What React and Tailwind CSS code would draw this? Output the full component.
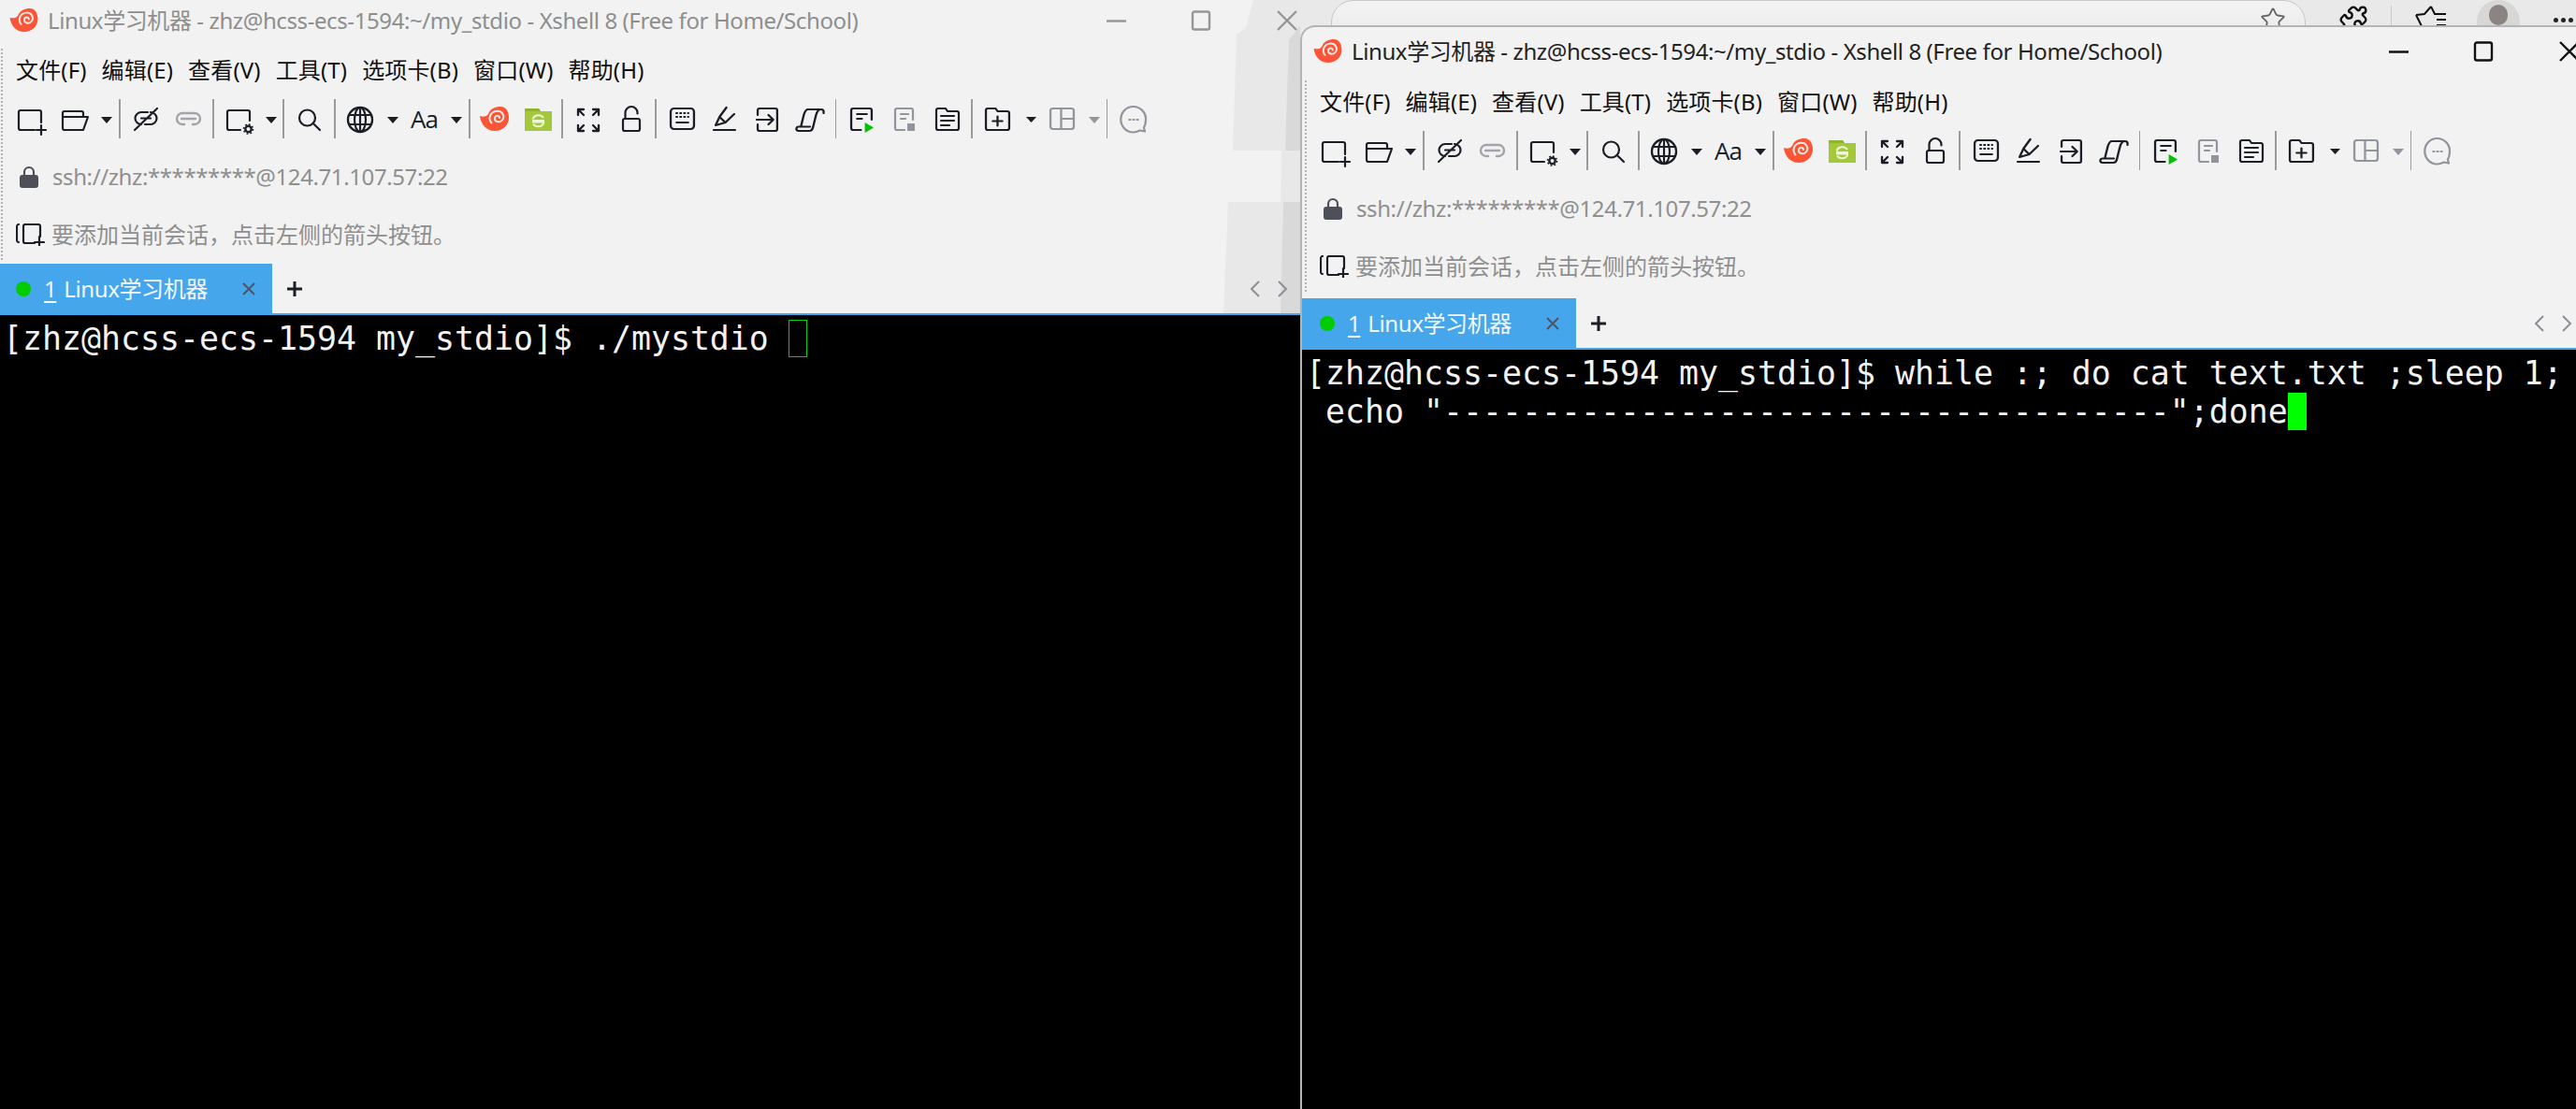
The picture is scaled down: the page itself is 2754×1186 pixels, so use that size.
import { Star, Puzzle } from 'lucide-react';

const ink = '#1b1e26';
const gray = '#92949e';

function Ico({ w, vw, className = '', children }) {
  return (
    <svg width={w} height="42" viewBox={`0 0 ${vw || w} 42`} preserveAspectRatio="none" fill="none" stroke={ink} strokeWidth="2.2" strokeLinecap="round" strokeLinejoin="round" className={`shrink-0 overflow-visible ${className}`}>
      {children}
    </svg>
  );
}

function Sep({ className }) {
  return <div className={`w-[1.5px] h-[42px] shrink-0 bg-[#9b9b9b] ${className}`} />;
}

function Caret({ className, dim }) {
  return (
    <svg width="12" height="42" viewBox="0 0 12 42" className={`shrink-0 ${className}`}>
      <polygon points="0,19 12,19 6,26" fill={dim ? gray : ink} />
    </svg>
  );
}

function Shell({ w = 31, h = 42, box = '0 0 31 42', className = '' }) {
  return (
    <svg width={w} height={h} viewBox={box} className={`shrink-0 ${className}`}>
      <path d="M0 18C4 19.500 7 18.500 9 16C11 10 17 8 22 8C28 8 31 13 31 20C31 28 24 34 16 34C7 34 1 27 0 18Z" fill="#fb5437" />
      <path d="M12.500 25.500C8.500 21 11 13.500 18 12.800C24 12.300 27 18 24.300 22C21.300 26 15.500 24.300 16 20.300C16.500 17 21 17 21 20" fill="none" stroke="#f6e9e4" strokeWidth="2" strokeLinecap="round" />
    </svg>
  );
}

function Toolbar() {
  return (
    <div className="flex h-[42px] pl-[19px]">
      <Ico w={31}>
        <path d="M1 27V14a2 2 0 0 1 2-2h20a2 2 0 0 1 2 2v11M18 33H3a2 2 0 0 1-2-2v-5M25 28v10M20 33h10" />
      </Ico>
      <Ico w={30} className="ml-[15px]">
        <path d="M2 19h27l-5 14H4a2 2 0 0 1-2-2V15a2 2 0 0 1 2-2h18a2 2 0 0 1 2 2v4" />
      </Ico>
      <Caret className="ml-[13px]" />
      <Sep className="ml-[7px]" />
      <Ico w={28} className="ml-[13.5px]">
        <path d="M9 27a6.500 6.500 0 0 1 0-13h7M19 14a6.500 6.500 0 0 1 0 13h-6M9 20.500h10M2 33L26 10" />
      </Ico>
      <Ico w={29} className="ml-[17px]">
        <g stroke="#a2a4ac" strokeWidth="2.400">
          <path d="M10 27H8a6 6 0 0 1 0-12h13a6 6 0 0 1 0 12h-2M7 21h15" />
        </g>
      </Ico>
      <Sep className="ml-[11px]" />
      <Ico w={30} className="ml-[13.5px]">
        <path d="M1 27V14a2 2 0 0 1 2-2h20a2 2 0 0 1 2 2v9M15 33H3a2 2 0 0 1-2-2v-5" />
        <circle cx="23.500" cy="32" r="3.200" strokeWidth="2.400" />
        <circle cx="23.500" cy="32" r="5" strokeWidth="1.600" strokeDasharray="1.800 2.100" strokeLinecap="butt" />
      </Ico>
      <Caret className="ml-[12px]" />
      <Sep className="ml-[6px]" />
      <Ico w={25} className="ml-[15.5px]">
        <circle cx="9.500" cy="20" r="8.500" />
        <path d="M15.800 26L23 33" />
      </Ico>
      <Sep className="ml-[13px]" />
      <Ico w={29} className="ml-[12.5px]">
        <circle cx="14" cy="22" r="13" strokeWidth="2.400" />
        <ellipse cx="14" cy="22" rx="6" ry="13" />
        <path d="M14 9v26M2.500 17h23M2.500 27h23" />
      </Ico>
      <Caret className="ml-[14px]" />
      <span className="ml-[13px] w-[29px] text-[26px] leading-[42px] text-[#1b1e26] shrink-0 font-['Open_Sans',sans-serif] tracking-[-1px]">Aa</span>
      <Caret className="ml-[14px]" />
      <Sep className="ml-[7px]" />
      <Shell className="ml-[10.5px]" />
      <svg width="29" height="42" viewBox="0 0 29 42" className="ml-[17px] shrink-0">
        <path d="M0 10h15l2 3h12v21H0z" fill="#a3c93b" />
        <path d="M0 10h15l2 3H0z" fill="#8fb52e" />
        <path d="M8.500 21.500a6.500 6.500 0 0 1 11.500-1.500M20.500 25a6.500 6.500 0 0 1-11.500 1.500M8 23h13M8 24.500h13" fill="none" stroke="#eef5d6" strokeWidth="2" />
      </svg>
      <Sep className="ml-[10px]" />
      <Ico w={24} className="ml-[15.5px]">
        <g strokeWidth="2.300">
          <path d="M1 17v-6h6M1.500 11.500L7 17M17 11h6v6M22.500 11.500L17 17M1 28v6h6M1.500 33.500L7 28M23 28v6h-6M22.500 33.500L17 28" />
        </g>
      </Ico>
      <Ico w={20} className="ml-[24px]">
        <rect x="1" y="21" width="18" height="13" rx="2" />
        <path d="M3.500 21v-6.500a6.500 6.500 0 0 1 13 0v1" />
      </Ico>
      <Sep className="ml-[15px]" />
      <Ico w={27} vw={26} className="ml-[14.5px]">
        <rect x="1" y="10" width="24" height="22" rx="3.500" />
        <path d="M6 15h14M6 19h14" strokeDasharray="2.500 1.500" strokeLinecap="butt" />
        <path d="M7 25h12" />
      </Ico>
      <Ico w={24} vw={23} className="ml-[20px]">
        <path d="M13 9L6 19L2 28l10-3l9-9M6 19l6 6M0 33h22" />
      </Ico>
      <Ico w={24} vw={23} className="ml-[22px]">
        <path d="M1 17v-5a2 2 0 0 1 2-2h16a2 2 0 0 1 2 2v20a2 2 0 0 1-2 2H3a2 2 0 0 1-2-2v-5M0 22h17M12 17l5 5-5 5" />
      </Ico>
      <Ico w={30} vw={28} className="ml-[18px]">
        <path d="M12 11h13c-3 0-4 2-5 6l-3 13c-.5 3-2 4-4 4H3c-2 0-3-1-2.500-3 .3-1 1-1.500 2-1.500H14M12 11c-2 0-3 2-4 5l-3 13M25 11c2 0 3 1 2.500 4" />
      </Ico>
      <Sep className="ml-[11.5px]" />
      <Ico w={25} vw={24} className="ml-[15px]">
        <path d="M11 33H3a2 2 0 0 1-2-2V12a2 2 0 0 1 2-2h17a2 2 0 0 1 2 2v10M7 16h10M7 21h5" />
        <polygon points="15,25 24,30.500 15,36" fill="#00c000" stroke="none" />
      </Ico>
      <Ico w={23} className="ml-[22px]">
        <g stroke={gray}>
          <path d="M11 33H3a2 2 0 0 1-2-2V12a2 2 0 0 1 2-2h15a2 2 0 0 1 2 2v10M7 16h8M7 21h5" />
        </g>
        <rect x="14" y="26" width="8" height="8" fill={gray} stroke="none" />
      </Ico>
      <Ico w={26} className="ml-[21px]">
        <path d="M1 31V12a2 2 0 0 1 2-2h8l2 3h10a2 2 0 0 1 2 2v16a2 2 0 0 1-2 2H3a2 2 0 0 1-2-2zM6 18h14M6 23h14M6 28h9" />
      </Ico>
      <Sep className="ml-[12px]" />
      <Ico w={28} vw={27} className="ml-[13.5px]">
        <path d="M1 31V12a2 2 0 0 1 2-2h8l2 3h10a2 2 0 0 1 2 2v16a2 2 0 0 1-2 2H3a2 2 0 0 1-2-2zM13 18.500v10M8 23.500h10" />
      </Ico>
      <svg width="11" height="42" viewBox="0 0 11 42" className="ml-[16px] shrink-0">
        <polygon points="0,19 11,19 5.500,25" fill={ink} />
      </svg>
      <Ico w={27} vw={26} className="ml-[14px]">
        <g stroke={gray}>
          <rect x="1" y="10" width="24" height="22" rx="2.500" />
          <path d="M12 10v22M12 21h13" />
        </g>
      </Ico>
      <Caret dim className="ml-[15px]" />
      <Sep className="ml-[6.5px]" />
      <Ico w={28} vw={27} className="ml-[14px]">
        <g stroke={gray}>
          <path d="M13 8a12.500 13.500 0 0 0 0 27.500c3 0 5-1 7-2l5 1-1-4c1.500-2.500 2-5 2-8A13 13.500 0 0 0 13 8z" />
          <path d="M9 22h1M13 22h1M17 22h1" />
        </g>
      </Ico>
    </div>
  );
}

function Menu() {
  return (
    <div className="flex items-center h-[62px] pl-[17px] gap-[16px] text-[24px] tracking-[0.15px] text-[#111]">
      {['文件(F)', '编辑(E)', '查看(V)', '工具(T)', '选项卡(B)', '窗口(W)', '帮助(H)'].map((m) => (
        <span key={m}>{m}</span>
      ))}
    </div>
  );
}

function XshellWindow({ className, titleClass, controlColor, spacerClass, titleRowClass, inset, children }) {
  return (
    <div className={`flex flex-col overflow-hidden ${className}`}>
      <div className={`flex items-center shrink-0 ${titleRowClass}`}>
        <Shell w={32} h={26} box="0 8 32 27" className={inset ? 'ml-[12px]' : 'ml-[10px]'} />
        <span className={`ml-[9px] text-[24px] tracking-[-0.4px] whitespace-nowrap ${titleClass}`}>
          Linux学习机器 - zhz@hcss-ecs-1594:~/my_stdio - Xshell 8 (Free for Home/School)
        </span>
        <svg width="210" height="24" viewBox="0 0 210 24" fill="none" stroke={controlColor} strokeWidth="2.400" className="ml-auto shrink-0">
          <path d="M6 12.500h21" />
          <rect x="98" y="2.500" width="18" height="19" rx="2" />
          <path d="M189 2l20 20M209 2l-20 20" />
        </svg>
      </div>
      <div className={inset ? 'pl-[2px]' : ''}>
        <div className="relative">
          <div className="absolute left-[1px] top-[8px] h-[226px] border-l-2 border-dotted border-[#b5b5b5]" />
          <Menu />
          <Toolbar />
          <div className="flex items-center h-[82px] pl-[21px] text-[24px] tracking-[-0.4px] text-[#8f8f8f]">
            <svg width="20" height="24" viewBox="0 0 20 24" className="shrink-0">
              <path d="M5 11V7a5 5 0 0 1 10 0v4" fill="none" stroke="#4e5059" strokeWidth="2.200" />
              <rect y="10" width="20" height="14" rx="3" fill="#4e5059" />
            </svg>
            <span className="ml-[15px]">ssh://zhz:*********@124.71.107.57:22</span>
          </div>
          <div className="flex items-center h-[42px] pl-[17px] text-[24px] text-[#8f8f8f]">
            <svg width="31" height="24" viewBox="0 0 31 24" fill="none" stroke={ink} strokeWidth="2.200" strokeLinecap="round" className="shrink-0">
              <path d="M3 1C1 1 1 2 1 4v13c0 2 0 3 2 3M8 17V3a2 2 0 0 1 2-2h14a2 2 0 0 1 2 2v11M20 21H10a2 2 0 0 1-2-2v-2M25 14v10M20 20h10" />
            </svg>
            <span className="ml-[7px]">要添加当前会话，点击左侧的箭头按钮。</span>
          </div>
        </div>
      </div>
      <div className={spacerClass} />
      <div className="flex items-center h-[53px] shrink-0">
        <div className={`flex items-center h-full bg-[#46a6ec] text-[24px] tracking-[-0.4px] text-[#f2f8fd] ${inset ? 'w-[293px] pl-[19px]' : 'w-[291px] pl-[17px]'}`}>
          <div className="w-[16px] h-[16px] rounded-full bg-[#00cc00] shrink-0" />
          <span className="ml-[14px] underline underline-offset-4">1</span>
          <span className="ml-[8px]">Linux学习机器</span>
          <svg width="14" height="14" viewBox="0 0 14 14" fill="none" stroke="#4c5560" strokeWidth="2" className="ml-auto mr-[18px] shrink-0">
            <path d="M1 1l12 12M13 1L1 13" />
          </svg>
        </div>
        <svg width="16" height="16" viewBox="0 0 16 16" fill="none" stroke={ink} strokeWidth="3" className="ml-[16px] shrink-0">
          <path d="M8 0v16M0 8h16" />
        </svg>
        <svg width="40" height="18" viewBox="0 0 40 18" fill="none" stroke="#8c8f96" strokeWidth="2" className={`ml-auto shrink-0 ${inset ? 'mr-[9px]' : 'mr-[13px]'}`}>
          <path d="M9 1L1 9l8 8M30 1l8 8-8 8" />
        </svg>
      </div>
      <div className="h-[2px] bg-[#46a6ec] shrink-0" />
      {children}
    </div>
  );
}

function Terminal({ className, children }) {
  return (
    <div className={`flex-1 bg-black pt-[5px] text-[#f2f2f2] text-[34.88px] leading-[41px] whitespace-pre font-['DejaVu_Sans_Mono',monospace] ${className}`}>
      {children}
    </div>
  );
}

function BrowserStrip() {
  return (
    <div className="absolute left-[1390px] top-0 right-0 h-[30px] flex bg-[#e9e9e9] overflow-hidden">
      <div className="ml-[33px] w-[1042px] h-[60px] rounded-[24px] border border-[#c8c8c8] bg-linear-to-b from-[#f3f3f3] to-[#e6e6e6] flex justify-end pr-[20px] pt-[6px]">
        <Star size={28} strokeWidth={1.600} className="text-[#666]" />
      </div>
      <Puzzle size={32} strokeWidth={1.800} className="ml-[35px] mt-[5px] text-[#111] shrink-0" />
      <div className="ml-[24px] w-px h-[30px] mt-[6px] bg-[#c8c8c8] shrink-0" />
      <svg width="36" height="30" viewBox="0 0 36 30" fill="none" stroke="#111" strokeWidth="2" className="ml-[24px] shrink-0">
        <path d="M18 7l4 8h12M2 16l9-1 7-8M9 30l-7-14M24 21h10M24 27h10" />
      </svg>
      <div className="ml-[31px] w-[46px] h-[46px] rounded-full bg-[#d9d7d5] flex items-start justify-center pt-[5px] shrink-0">
        <div className="w-[20px] h-[22px] rounded-full bg-[#8a8583]" />
      </div>
      <div className="ml-[36px] mt-[19px] flex gap-[3px] shrink-0">
        <div className="w-[5px] h-[5px] rounded-full bg-[#222]" />
        <div className="w-[5px] h-[5px] rounded-full bg-[#222]" />
        <div className="w-[5px] h-[5px] rounded-full bg-[#222]" />
      </div>
    </div>
  );
}

export default function App() {
  return (
    <div className="relative w-[2754px] h-[1186px] overflow-hidden bg-[#e9e9e9] font-['Noto_Sans','Noto_Sans_CJK_SC',sans-serif]">
      <BrowserStrip />

      <div className="absolute left-0 top-0 w-[1390px] h-[1186px] bg-[#f2f2f2]">
        <svg width="90" height="335" viewBox="0 0 90 335" className="absolute left-[1300px] top-0">
          <polygon points="40,0 32,30 22,37 18,161 70,161 69,216 13,216 8,335 90,335 90,0" fill="#e8e8e8" />
          <polygon points="78,43 90,27 90,161 74,161" fill="#d9d9d9" />
          <polygon points="72,216 90,216 90,335 69,335" fill="#d9d9d9" />
        </svg>
        <XshellWindow
          className="relative h-full"
          titleRowClass="h-[44px] pr-[3px]"
          titleClass="text-[#8e8e8e]"
          controlColor="#969696"
          spacerClass="h-[10px] shrink-0"
        >
          <Terminal className="pl-[3px]">
            {'[zhz@hcss-ecs-1594 my_stdio]$ ./mystdio '}
            <span className="inline-block w-[20px] h-[40px] border border-[#00d000] align-top" />
          </Terminal>
        </XshellWindow>
      </div>

      <div className="absolute left-[1390px] top-[27px] w-[1369px] h-[1159px] rounded-tl-[16px] border-l-2 border-t-2 border-[#b4b4b4] bg-[#f2f2f2] overflow-hidden">
        <XshellWindow
          inset
          className="h-full"
          titleRowClass="h-[49px] pt-[3px] pr-[1px]"
          titleClass="text-[#222]"
          controlColor="#111"
          spacerClass="h-[13px] shrink-0"
        >
          <Terminal className="pl-[4px]">
            {'[zhz@hcss-ecs-1594 my_stdio]$ while :; do cat text.txt ;sleep 1;\n echo "-------------------------------------";done'}
            <span className="inline-block w-[20px] h-[40px] bg-[#00ff00] align-top" />
          </Terminal>
        </XshellWindow>
      </div>
    </div>
  );
}
